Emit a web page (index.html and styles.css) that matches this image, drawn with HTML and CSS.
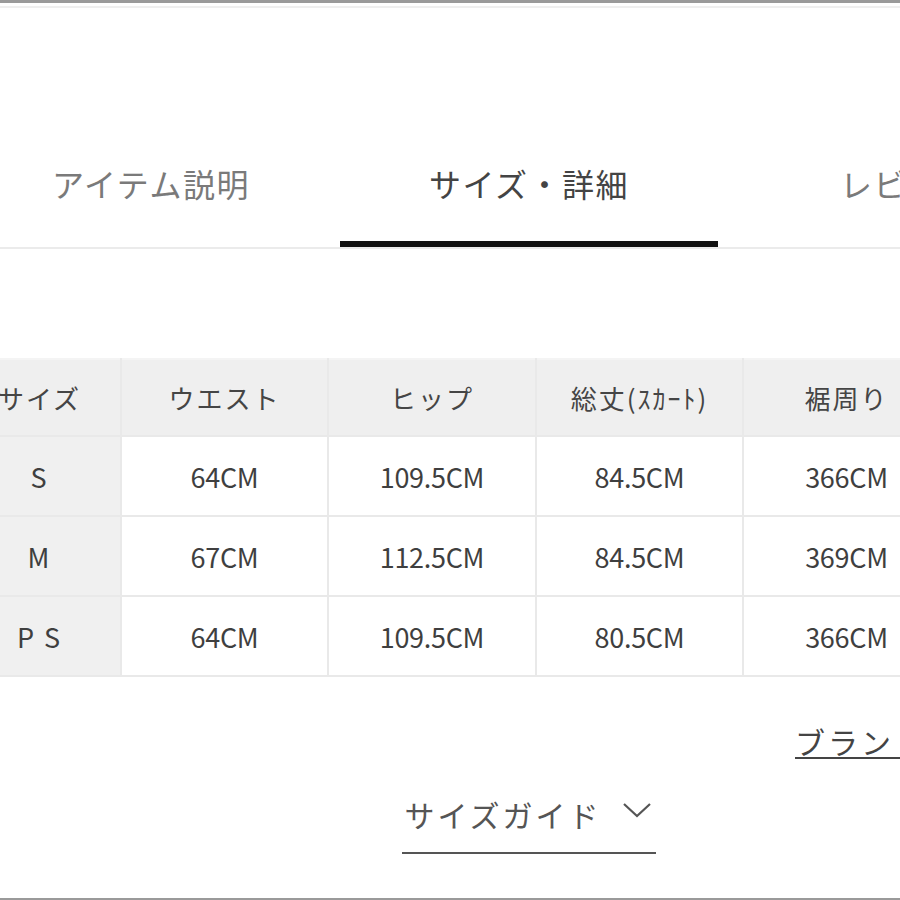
FILE: index.html
```html
<!DOCTYPE html>
<html lang="ja">
<head>
<meta charset="utf-8">
<title>サイズ・詳細</title>
<link rel="stylesheet" href="styles.css">
</head>
<body>
<div class="page">
  <div class="topbar"></div>
  <div class="topline"></div>

  <nav class="tabs">
    <div class="tab">アイテム説明</div>
    <div class="tab active">サイズ・詳細</div>
    <div class="tab">レビュー</div>
  </nav>

  <table class="size-table">
    <colgroup>
      <col class="c0"><col class="c1"><col class="c2"><col class="c3"><col class="c4">
    </colgroup>
    <thead>
      <tr>
        <th class="label">サイズ</th>
        <th>ウエスト</th>
        <th>ヒップ</th>
        <th>総丈(ｽｶｰﾄ)</th>
        <th>裾周り</th>
      </tr>
    </thead>
    <tbody>
      <tr>
        <th class="label">S</th>
        <td>64CM</td><td>109.5CM</td><td>84.5CM</td><td>366CM</td>
      </tr>
      <tr>
        <th class="label">M</th>
        <td>67CM</td><td>112.5CM</td><td>84.5CM</td><td>369CM</td>
      </tr>
      <tr>
        <th class="label">P S</th>
        <td>64CM</td><td>109.5CM</td><td>80.5CM</td><td>366CM</td>
      </tr>
    </tbody>
  </table>

  <div class="brand-row"><a class="brand-link">ブランドサイズ表</a></div>

  <div class="guide-wrap">
    <div class="guide">
      <span>サイズガイド</span>
      <svg class="chev" width="30" height="18" viewBox="0 0 30 18"><path d="M2 3 L15 15 L28 3" fill="none" stroke="#555" stroke-width="2.2"/></svg>
    </div>
  </div>

  <div class="bottomline"></div>
</div>
</body>
</html>
```

FILE: styles.css
```css
html, body {
  margin: 0;
  padding: 0;
  background: #fff;
}
body {
  font-family: "Noto Sans CJK JP", "Noto Sans", sans-serif;
  color: #444;
}
.page {
  width: 900px;
  height: 900px;
  overflow: hidden;
  position: relative;
  display: flex;
  flex-direction: column;
}
.topbar {
  height: 3px;
  background: #9a9a9a;
  flex: none;
}
.topline {
  height: 2px;
  margin-top: 3px;
  background: #efefef;
  flex: none;
}
.tabs {
  display: flex;
  margin-top: 112px;
  margin-left: -38px;
  width: 938px;
  border-bottom: 2px solid #ebebeb;
  flex: none;
}
.tab {
  width: 378px;
  flex: none;
  text-align: center;
  font-size: 32px;
  line-height: 40px;
  letter-spacing: 1.5px;
  padding-top: 43px;
  padding-bottom: 38px;
  border-bottom: 6px solid transparent;
  color: #7a7a7a;
  white-space: nowrap;
}
.tab.active {
  color: #444;
  border-bottom-color: #111;
}
.size-table {
  margin-top: 109px;
  margin-left: -43px;
  border-collapse: collapse;
  table-layout: fixed;
  width: 992px;
  flex: none;
}
.c0 { width: 163px; }
.c1 { width: 207px; }
.c2 { width: 208px; }
.c3 { width: 207px; }
.c4 { width: 207px; }
.size-table th,
.size-table td {
  border: 2px solid #e9e9e9;
  text-align: center;
  vertical-align: middle;
  padding: 0;
  font-weight: 400;
  color: #454545;
  white-space: nowrap;
}
.size-table thead th {
  height: 75px;
  background: #efefef;
  font-size: 26px;
  letter-spacing: 2px;
}
.size-table tbody td,
.size-table tbody th {
  height: 78px;
  font-size: 27px;
  letter-spacing: -0.3px;
  color: #3f3f3f;
}
.size-table tbody th.label {
  background: #f0f0f0;
  letter-spacing: 2px;
}
.size-table thead tr th {
  border-top-color: #f4f4f4;
}
.brand-row {
  margin-top: 44px;
  padding-left: 795px;
  white-space: nowrap;
  flex: none;
}
.brand-link {
  font-size: 30px;
  line-height: 40px;
  color: #444;
  letter-spacing: 3px;
  text-decoration: underline;
  text-decoration-thickness: 2px;
  text-underline-offset: 3px;
}
.guide-wrap {
  margin-left: -38px;
  width: 1134px;
  display: flex;
  justify-content: center;
  margin-top: 33px;
  flex: none;
}
.guide {
  display: flex;
  align-items: center;
  gap: 20px;
  padding: 0 4px 18px 2px;
  border-bottom: 2px solid #555;
  font-size: 30px;
  line-height: 40px;
  letter-spacing: 3px;
  color: #555;
}
.chev {
  display: block;
  margin-top: -8px;
}
.bottomline {
  margin-top: auto;
  height: 2px;
  background: #9a9a9a;
  flex: none;
}
```
